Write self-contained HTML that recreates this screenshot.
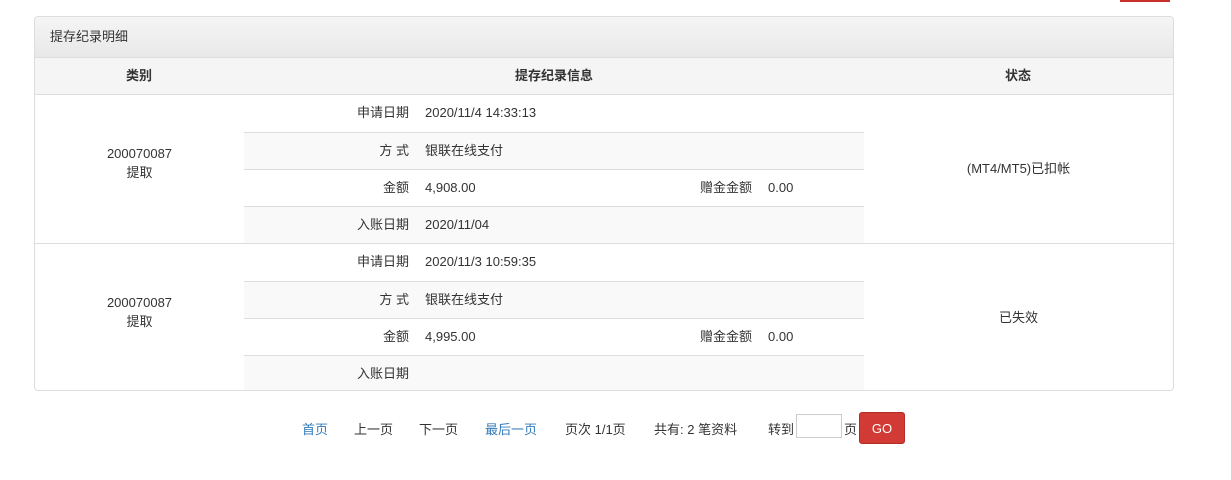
<!DOCTYPE html>
<html><head><meta charset="utf-8"><style>
body{margin:0;background:#fff;font-family:"Liberation Sans","Noto Sans CJK SC",sans-serif;font-size:13px;color:#333;width:1231px;height:480px;position:relative;overflow:hidden}
.red{position:absolute;left:1120px;top:0;width:50px;height:2px;background:#c9302c}
.panel{position:absolute;left:34px;top:16px;width:1138px;height:373px;border:1px solid #ddd;border-radius:4px;overflow:hidden}
.ph{height:40px;line-height:40px;padding-left:15px;background:linear-gradient(#f5f5f5,#e8e8e8);border-bottom:1px solid #ddd}
.th{height:36px;line-height:36px;background:#f5f5f5;border-bottom:1px solid #ddd;font-weight:bold;position:relative}
.th span{position:absolute;transform:translateX(-50%)}
.grp{position:relative;height:148px;border-bottom:1px solid #ddd}
.grp:last-child{border-bottom:none}
.cat{position:absolute;left:0;width:209px;top:-6px;height:148px;display:flex;align-items:center;justify-content:center;text-align:center;line-height:19px}
.st{position:absolute;left:829px;width:309px;top:-2px;height:148px;display:flex;align-items:center;justify-content:center}
.r{position:absolute;left:209px;width:620px;height:36px;line-height:36px;border-top:1px solid #ddd}
.r.first{border-top:none;height:37px}
.r.alt{background:#f9f9f9}
.l{position:absolute;right:455px;}
.v{position:absolute;left:181px}
.l2{position:absolute;right:112px}
.v2{position:absolute;left:524px}
.pg{position:absolute;top:419px;left:302px;font-size:13px}
.pg span{position:absolute;white-space:nowrap}
.b{color:#337ab7}
input{position:absolute;left:796px;top:414px;width:46px;height:24px;border:1px solid #ccc;box-sizing:border-box;padding:0}
.go{position:absolute;left:859px;top:412px;width:46px;height:32px;background:#d23a36;border:1px solid #b52b27;border-radius:3px;color:#fff;line-height:32px;text-align:center;box-sizing:border-box}
</style></head><body>
<div class="red"></div>
<div class="panel">
<div class="ph">提存纪录明细</div>
<div class="th"><span style="left:104px">类别</span><span style="left:519px">提存纪录信息</span><span style="left:983px">状态</span></div>
<div class="grp">
<div class="cat">200070087<br>提取</div>
<div class="r first" style="top:0"><span class="l">申请日期</span><span class="v">2020/11/4 14:33:13</span></div>
<div class="r alt" style="top:37px"><span class="l">方 式</span><span class="v">银联在线支付</span></div>
<div class="r" style="top:74px"><span class="l">金额</span><span class="v">4,908.00</span><span class="l2">赠金金额</span><span class="v2">0.00</span></div>
<div class="r alt" style="top:111px"><span class="l">入账日期</span><span class="v">2020/11/04</span></div>
<div class="st">(MT4/MT5)已扣帐</div>
</div>
<div class="grp">
<div class="cat">200070087<br>提取</div>
<div class="r first" style="top:0"><span class="l">申请日期</span><span class="v">2020/11/3 10:59:35</span></div>
<div class="r alt" style="top:37px"><span class="l">方 式</span><span class="v">银联在线支付</span></div>
<div class="r" style="top:74px"><span class="l">金额</span><span class="v">4,995.00</span><span class="l2">赠金金额</span><span class="v2">0.00</span></div>
<div class="r alt" style="top:111px"><span class="l">入账日期</span><span class="v"></span></div>
<div class="st">已失效</div>
</div>
</div>
<div class="pg">
<span class="b" style="left:0">首页</span>
<span style="left:52px">上一页</span>
<span style="left:117px">下一页</span>
<span class="b" style="left:183px">最后一页</span>
<span style="left:263px">页次 1/1页</span>
<span style="left:352px">共有: 2 笔资料</span>
<span style="left:466px">转到</span>
<span style="left:542px">页</span>
</div>
<input type="text">
<div class="go">GO</div>
</body></html>
